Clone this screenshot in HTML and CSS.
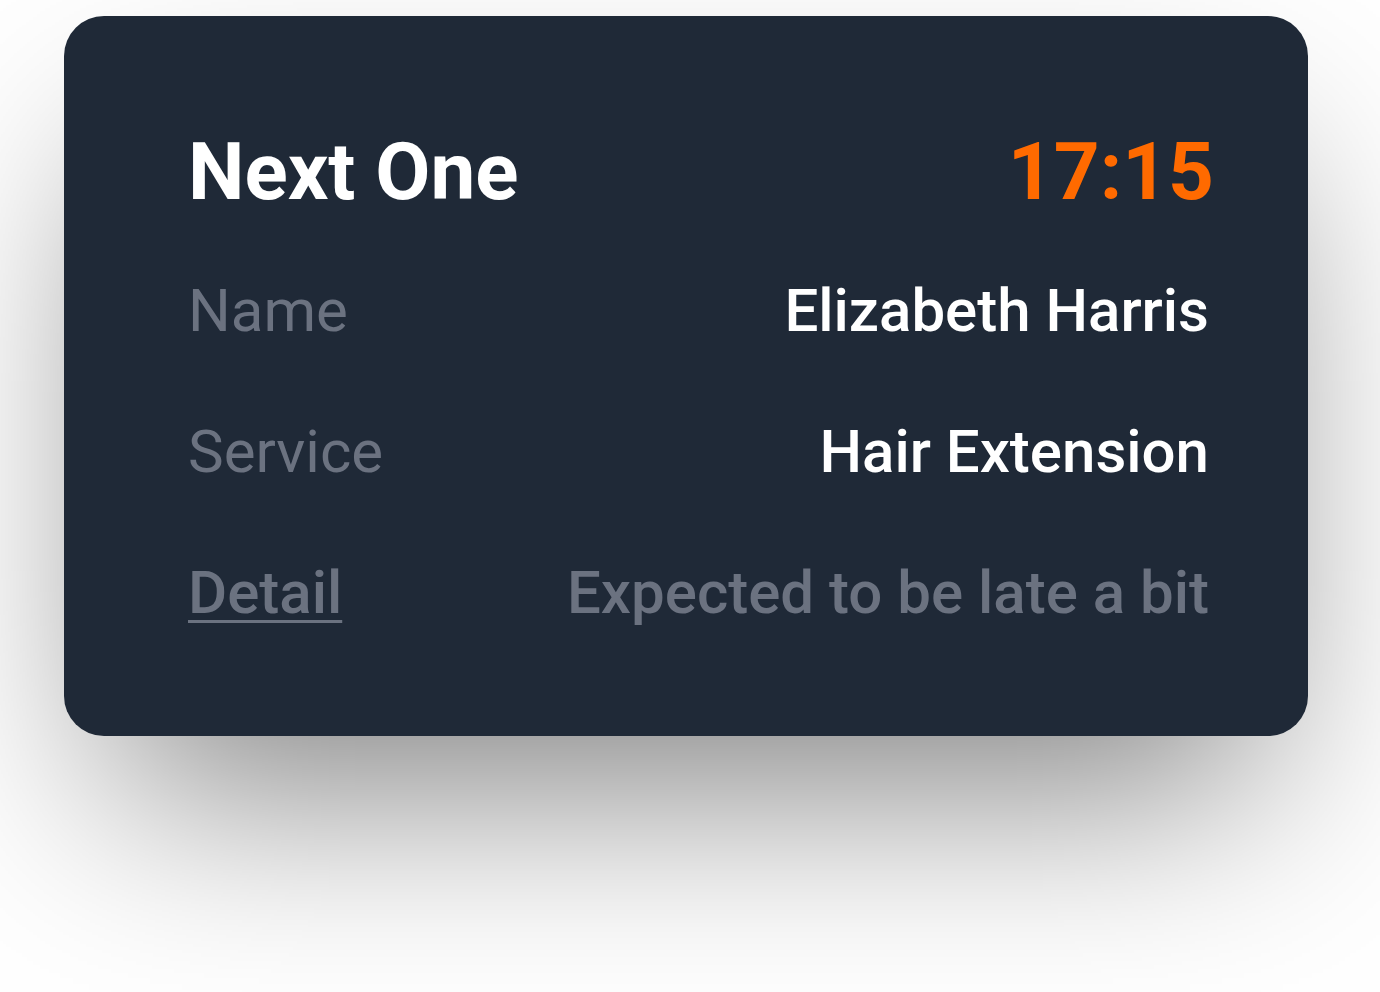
FILE: index.html
```
<!DOCTYPE html>
<html lang="en">

<head>
    <meta charset="UTF-8">
    <meta
        name="viewport"
        content="width=device-width, initial-scale=1.0"
    >

    <title>Next One</title>

    <link rel="stylesheet" href="styles.css">

</head>

<body>
    <section class="card">
        <div class="card-header">
            <h1>Next One</h1>
            <span class="card-time">17:15</span>
        </div>

        <div class="card-rows">
            <div class="row">
                <span class="row-label">Name</span>
                <span class="row-value">Elizabeth Harris</span>
            </div>

            <div class="row">
                <span class="row-label">Service</span>
                <span class="row-value">Hair Extension</span>
            </div>

            <div class="row">
                <a href="#" class="row-label row-link">Detail</a>
                <span class="row-value row-muted">Expected to be late a bit</span>
            </div>
        </div>
    </section>
</body>

</html>
```

FILE: styles.css
```
html,
body {
    margin: 0;
    padding: 0;
    background-color: #ffffff;
}

body {
    box-sizing: border-box;
    min-height: 100vh;
    padding: 16px 0 0 64px;
    font-family: Roboto, "Liberation Sans", sans-serif;
}

.card {
    width: 1244px;
    height: 720px;
    box-sizing: border-box;
    padding: 116px 94px 0 124px;
    background-color: #1f2937;
    border-radius: 40px;
    box-shadow: 0 100px 200px -48px rgba(0, 0, 0, 0.5);
}

.card-header {
    display: flex;
    justify-content: space-between;
    align-items: baseline;
    line-height: 1;

    & h1 {
        margin: 0;
        font-size: 80px;
        font-weight: 700;
        color: #ffffff;
    }
}

.card-time {
    font-size: 80px;
    font-weight: 700;
    color: #ff6a00;
}

.card-rows {
    display: flex;
    flex-direction: column;
    gap: 81px;
    margin: 69px 5px 0 0;
}

.row {
    display: flex;
    justify-content: space-between;
    align-items: baseline;
    font-size: 60px;
    line-height: 1;
}

.row-label {
    color: #6b7280;
    font-weight: 400;
}

.row-link {
    font-weight: 500;
    text-decoration: underline;
    text-decoration-thickness: 3px;
    text-underline-offset: 7px;
}

.row-value {
    color: #ffffff;
    font-weight: 500;
}

.row-muted {
    color: #6b7280;
}
```
